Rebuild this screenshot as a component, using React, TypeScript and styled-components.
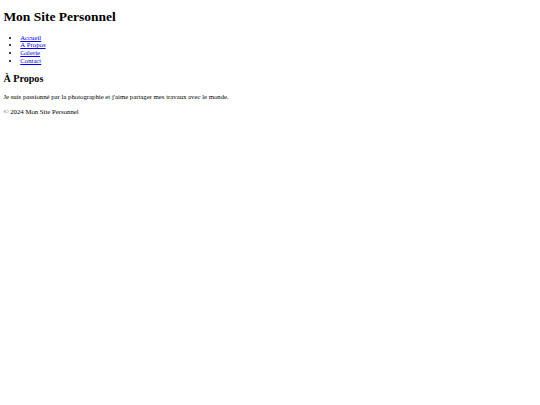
import * as React from 'react';
import styled, { createGlobalStyle } from 'styled-components';

// the reference is a 1280px page shown at 540px
const SCALE = 540 / 1280;
const px = (n: number) => `${n * SCALE}px`;

const GlobalStyle = createGlobalStyle`
  html, body {
    background: #ffffff;
  }
  body {
    margin: ${px(8)};
    font-family: "Liberation Serif", "Times New Roman", serif;
    font-size: ${px(16)};
    line-height: ${px(18.4)};
    color: #000000;
  }
`;

const Header = styled.header``;

const Title = styled.h1`
  font-size: ${px(32)};
  line-height: ${px(36.8)};
  font-weight: bold;
  margin: 5.6px 0 ${px(21.44)};
`;

const NavList = styled.ul`
  list-style: disc;
  margin: ${px(16)} 0;
  padding-left: ${px(40)};
`;

const NavLink = styled.a`
  color: #0000ee;
  text-decoration: underline;
`;

const Section = styled.section``;

const SectionTitle = styled.h2`
  font-size: ${px(24)};
  line-height: ${px(27.6)};
  font-weight: bold;
  margin: ${px(19.92)} 0;
`;

const Paragraph = styled.p`
  margin: ${px(16)} 0;
`;

const Footer = styled.footer``;

const links = ['Accueil', 'À Propos', 'Galerie', 'Contact'];

function App() {
  return (
    <>
      <GlobalStyle />
      <Header>
        <Title>Mon Site Personnel</Title>
        <nav>
          <NavList>
            {links.map((label) => (
              <li key={label}>
                <NavLink href="#">{label}</NavLink>
              </li>
            ))}
          </NavList>
        </nav>
      </Header>
      <Section>
        <SectionTitle>À Propos</SectionTitle>
        <Paragraph>
          Je suis passionné par la photographie et j'aime partager mes travaux avec le monde.
        </Paragraph>
      </Section>
      <Footer>
        <Paragraph>© 2024 Mon Site Personnel</Paragraph>
      </Footer>
    </>
  );
}

export default App;
